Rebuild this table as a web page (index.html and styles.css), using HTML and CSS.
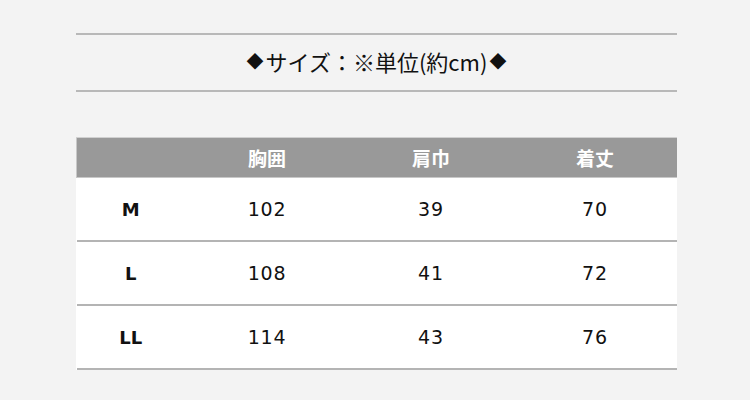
FILE: index.html
```html
<!DOCTYPE html>
<html lang="ja">
<head>
<meta charset="utf-8">
<link rel="stylesheet" href="styles.css">
</head>
<body>
<div class="wrap">
  <h2 class="title"><span class="dia">◆</span>サイズ：※単位(約cm)<span class="dia">◆</span></h2>
  <table class="size">
    <thead>
      <tr><th class="c1"></th><th>胸囲</th><th>肩巾</th><th>着丈</th></tr>
    </thead>
    <tbody>
      <tr><td class="lbl">M</td><td>102</td><td>39</td><td>70</td></tr>
      <tr><td class="lbl">L</td><td>108</td><td>41</td><td>72</td></tr>
      <tr><td class="lbl">LL</td><td>114</td><td>43</td><td>76</td></tr>
    </tbody>
  </table>
</div>
</body>
</html>
```
FILE: styles.css
```css
html, body {
  margin: 0;
  padding: 0;
  background: #f3f3f3;
}
.wrap {
  width: 601px;
  margin-left: 76px;
  padding-top: 33px;
}
.title {
  margin: 0;
  height: 51px;
  padding-bottom: 4px;
  border-top: 2px solid #b8b8b8;
  border-bottom: 2px solid #b8b8b8;
  display: flex;
  align-items: center;
  justify-content: center;
  font-family: "Noto Sans CJK JP", sans-serif;
  font-weight: normal;
  font-size: 22px;
  color: #111;
}
.title .dia {
  font-size: 17px;
  margin: 0 2px;
}
.size {
  margin-top: 45px;
  width: 601px;
  border-collapse: collapse;
  background: #fff;
  table-layout: fixed;
}
.size th {
  background: #999;
  color: #fff;
  height: 39px;
  padding: 0;
  font-family: "Noto Sans CJK JP", sans-serif;
  font-weight: bold;
  font-size: 19px;
  border-top: 1px solid #d0d0d0;
  border-bottom: 1px solid #c8c8c8;
  width: 164px;
}
.size th.c1 {
  width: 108px;
  border-left: 1px solid #c8c8c8;
}
.size td {
  height: 62px;
  padding: 0;
  text-align: center;
  font-family: "DejaVu Sans", Verdana, sans-serif;
  font-size: 19px;
  color: #111;
  letter-spacing: 0.8px;
  border-bottom: 2px solid #b4b4b4;
}
.size td.lbl {
  font-weight: bold;
  letter-spacing: 0;
  font-size: 18px;
}
```
